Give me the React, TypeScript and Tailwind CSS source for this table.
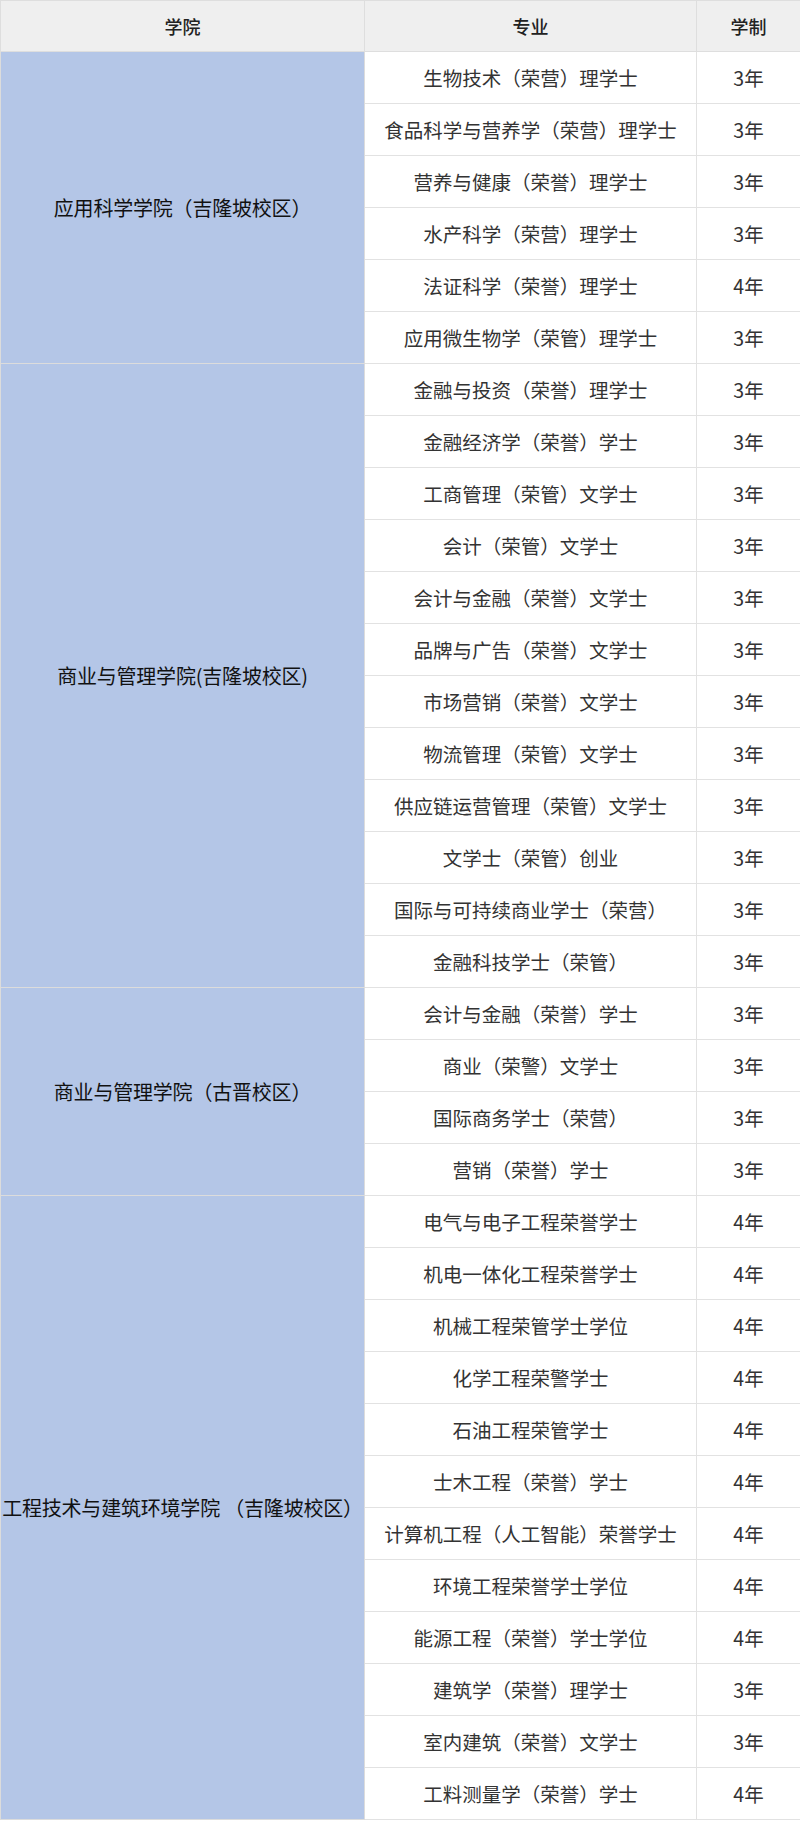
const groups: { college: string; rows: [string, string][] }[] = [
  {
    college: "应用科学学院（吉隆坡校区）",
    rows: [
      ["生物技术（荣营）理学士", "3年"],
      ["食品科学与营养学（荣营）理学士", "3年"],
      ["营养与健康（荣誉）理学士", "3年"],
      ["水产科学（荣营）理学士", "3年"],
      ["法证科学（荣誉）理学士", "4年"],
      ["应用微生物学（荣管）理学士", "3年"],
    ],
  },
  {
    college: "商业与管理学院(吉隆坡校区)",
    rows: [
      ["金融与投资（荣誉）理学士", "3年"],
      ["金融经济学（荣誉）学士", "3年"],
      ["工商管理（荣管）文学士", "3年"],
      ["会计（荣管）文学士", "3年"],
      ["会计与金融（荣誉）文学士", "3年"],
      ["品牌与广告（荣誉）文学士", "3年"],
      ["市场营销（荣誉）文学士", "3年"],
      ["物流管理（荣管）文学士", "3年"],
      ["供应链运营管理（荣管）文学士", "3年"],
      ["文学士（荣管）创业", "3年"],
      ["国际与可持续商业学士（荣营）", "3年"],
      ["金融科技学士（荣管）", "3年"],
    ],
  },
  {
    college: "商业与管理学院（古晋校区）",
    rows: [
      ["会计与金融（荣誉）学士", "3年"],
      ["商业（荣警）文学士", "3年"],
      ["国际商务学士（荣营）", "3年"],
      ["营销（荣誉）学士", "3年"],
    ],
  },
  {
    college: "工程技术与建筑环境学院 （吉隆坡校区）",
    rows: [
      ["电气与电子工程荣誉学士", "4年"],
      ["机电一体化工程荣誉学士", "4年"],
      ["机械工程荣管学士学位", "4年"],
      ["化学工程荣警学士", "4年"],
      ["石油工程荣管学士", "4年"],
      ["士木工程（荣誉）学士", "4年"],
      ["计算机工程（人工智能）荣誉学士", "4年"],
      ["环境工程荣誉学士学位", "4年"],
      ["能源工程（荣誉）学士学位", "4年"],
      ["建筑学（荣誉）理学士", "3年"],
      ["室内建筑（荣誉）文学士", "3年"],
      ["工料测量学（荣誉）学士", "4年"],
    ],
  },
];

export default function App() {
  return (
    <div className="w-[800px] bg-white font-['Noto_Sans_CJK_SC','Noto_Sans',sans-serif] text-[#333]">
      <table className="w-[800px] table-fixed border-collapse">
        <colgroup>
          <col className="w-[364px]" />
          <col className="w-[332px]" />
          <col className="w-[104px]" />
        </colgroup>
        <thead>
          <tr className="h-[51px] bg-[#efefef] text-[18px] font-medium text-[#222]">
            <th className="border border-[#dedede] font-medium">学院</th>
            <th className="border border-[#dedede] font-medium">专业</th>
            <th className="border border-[#dedede] font-medium">学制</th>
          </tr>
        </thead>
        <tbody>
          {groups.map((g) =>
            g.rows.map(([major, years], i) => (
              <tr key={g.college + major} className="h-[52px] text-[19.5px]">
                {i === 0 && (
                  <td
                    rowSpan={g.rows.length}
                    className="whitespace-nowrap border border-[#dcdcdc] bg-[#b4c6e7] px-0 text-center text-[20px] tracking-[-0.2px] text-[#111]"
                  >
                    {g.college}
                  </td>
                )}
                <td className="whitespace-nowrap border border-[#e2e2e2] text-center">
                  {major}
                </td>
                <td className="border border-[#e2e2e2] text-center">{years}</td>
              </tr>
            ))
          )}
        </tbody>
      </table>
    </div>
  );
}
